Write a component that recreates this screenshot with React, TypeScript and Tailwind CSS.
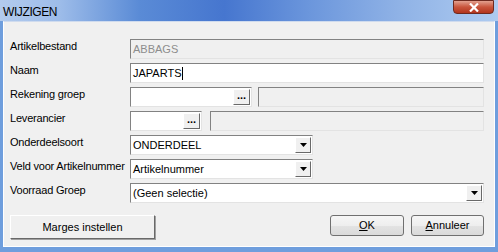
import type { ReactNode } from 'react';

const font = { fontFamily: '"Liberation Sans", Arial, sans-serif' };

function Sunken({ className = '', children, disabled }: { className?: string; children?: ReactNode; disabled?: boolean }) {
  return (
    <div
      className={`h-[20px] flex items-center border border-t-[#828282] border-l-[#828282] border-r-[#e3e3e3] border-b-[#e3e3e3] ${disabled ? 'bg-[#f0f0f0]' : 'bg-white'} ${className}`}
    >
      {children}
    </div>
  );
}

function DotsButton() {
  return (
    <div className="ml-auto mr-[1px] w-[17px] h-[16px] flex items-center justify-center bg-[#f0f0f0] border border-t-white border-l-white border-r-[#696969] border-b-[#696969] text-[11px] leading-none font-bold pb-[3px]">
      ...
    </div>
  );
}

function ArrowButton() {
  return (
    <div className="ml-auto mr-[1px] w-[16px] h-[16px] flex items-center justify-center bg-[#f0f0f0] border border-t-white border-l-white border-r-[#696969] border-b-[#696969]">
      <svg width="7" height="4" viewBox="0 0 7 4">
        <path d="M0 0h7L3.5 4z" fill="#000" />
      </svg>
    </div>
  );
}

function Row({ label, children }: { label: string; children: ReactNode }) {
  return (
    <div className="flex items-center h-[24px]">
      <div className="w-[120px] self-start pt-[3px] leading-[13px] text-[11px] tracking-[-0.2px] text-black">{label}</div>
      {children}
    </div>
  );
}

const vistaBtn =
  'h-[21px] rounded-[3px] border border-[#707070] bg-[linear-gradient(180deg,#f6f6f6_0%,#eeeeee_50%,#e3e3e3_51%,#dadada_100%)] text-[11px] text-black';

export default function App() {
  return (
    <div style={font} className="w-[498px] h-[252px] flex flex-col bg-[#6f9edd] overflow-hidden">
      {/* title bar */}
      <div className="h-[21px] shrink-0 flex items-start bg-[linear-gradient(90deg,#b3cbed_0%,#9dbce9_12%,#5a8bd6_28%,#4676cf_45%,#6b96dc_62%,#8fb2e6_80%,#aecbf0_100%)]">
        <div className="pl-[3px] pt-[3px] text-[12px] tracking-[-0.4px] text-black">WIJZIGEN</div>
        <div className="ml-auto mr-[4px] w-[41px] h-[14px] rounded-b-[4px] border border-[#6e2a20] bg-[linear-gradient(180deg,#e3a08f_0%,#c9553d_50%,#b2351d_100%)] flex items-center justify-center">
          <svg width="10" height="9" viewBox="0 0 10 9">
            <path d="M1 0.5L9 8.5M9 0.5L1 8.5" stroke="#fff" strokeWidth="2.2" />
          </svg>
        </div>
      </div>

      {/* content */}
      <div className="flex-1 mx-[3px] mb-[5px] border border-t-[#cfdbee] border-l-white border-r-white border-b-white bg-[#f0f0f0] flex flex-col pl-[6px] pr-[10px] pt-[15px]">
        <Row label="Artikelbestand">
          <Sunken disabled className="flex-1 pl-[2px]">
            <span className="text-[11px] text-[#8d8d8d]">ABBAGS</span>
          </Sunken>
        </Row>
        <Row label="Naam">
          <Sunken className="flex-1 pl-[2px]">
            <span className="text-[11px] text-black">JAPARTS</span>
            <span className="w-[1px] h-[13px] bg-black" />
          </Sunken>
        </Row>
        <Row label="Rekening groep">
          <div className="flex flex-1 gap-[6px]">
            <Sunken className="w-[122px]">
              <DotsButton />
            </Sunken>
            <Sunken disabled className="flex-1" />
          </div>
        </Row>
        <Row label="Leverancier">
          <div className="flex flex-1 gap-[8px]">
            <Sunken className="w-[72px]">
              <DotsButton />
            </Sunken>
            <Sunken disabled className="flex-1" />
          </div>
        </Row>
        <Row label="Onderdeelsoort">
          <Sunken className="w-[183px] pl-[2px]">
            <span className="text-[11px] text-black">ONDERDEEL</span>
            <ArrowButton />
          </Sunken>
        </Row>
        <Row label="Veld voor Artikelnummer">
          <Sunken className="w-[183px] pl-[2px]">
            <span className="text-[11px] text-black">Artikelnummer</span>
            <ArrowButton />
          </Sunken>
        </Row>
        <Row label="Voorraad Groep">
          <Sunken className="flex-1 pl-[2px]">
            <span className="text-[11px] text-black">(Geen selectie)</span>
            <ArrowButton />
          </Sunken>
        </Row>

        <div className="flex items-start mt-[10px]">
          <button className="w-[145px] h-[24px] bg-[#f0f0f0] border border-t-white border-l-white border-r-[#696969] border-b-[#696969] shadow-[1px_1px_0_#a0a0a0] text-[11px] text-black">
            Marges instellen
          </button>
          <div className="ml-auto flex gap-[7px]">
            <button className={`w-[74px] ${vistaBtn}`}>
              <span className="underline">O</span>K
            </button>
            <button className={`w-[73px] ${vistaBtn}`}>
              <span className="underline">A</span>nnuleer
            </button>
          </div>
        </div>
      </div>
    </div>
  );
}
